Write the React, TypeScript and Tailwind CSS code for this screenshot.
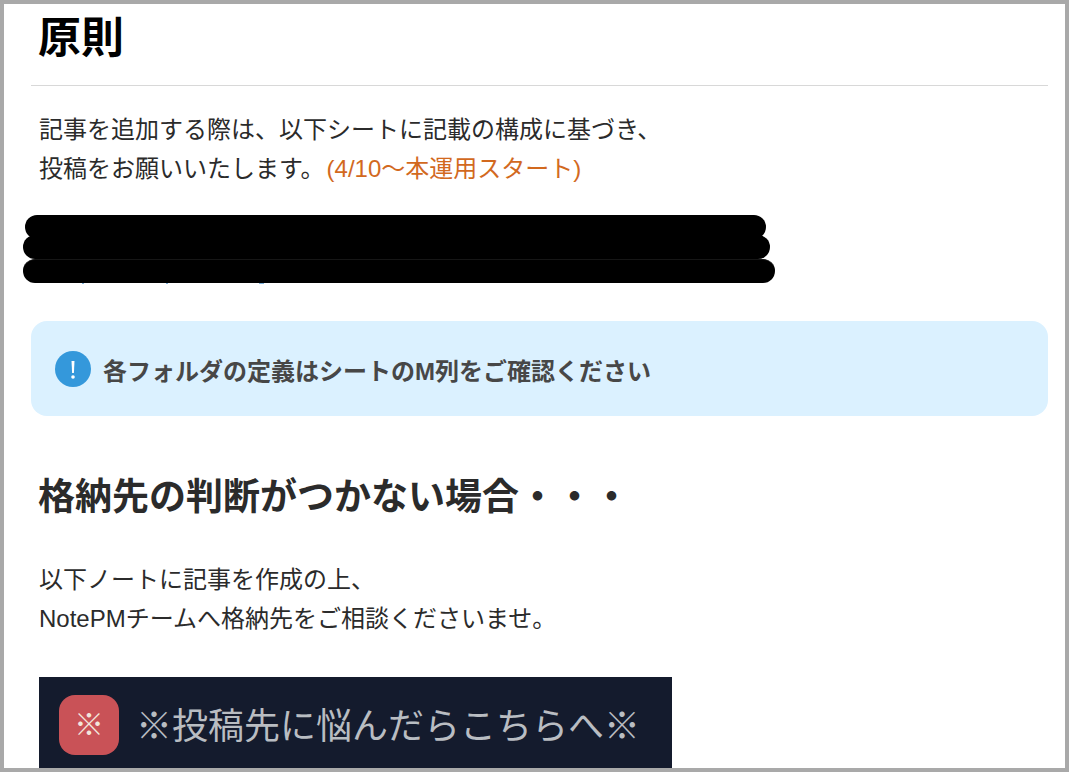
export default function App() {
  const font = { fontFamily: '"Liberation Sans", "Noto Sans CJK JP", sans-serif' };
  return (
    <div style={font} className="h-[772px] w-[1069px] overflow-hidden border-4 border-[#a9a9a9] bg-white">
      <div className="flex h-full flex-col overflow-hidden pl-[27px] pr-[17px]">
        <h1 className="ml-[7px] h-[81px] shrink-0 pt-[8px] text-[43px] leading-[52px] font-bold text-black">原則</h1>
        <div className="h-px shrink-0 bg-[#d8d8d8]" />
        <p className="mt-[24px] ml-[8px] shrink-0 text-[24px] leading-[39px] text-[#2b2b2b]">
          記事を追加する際は、以下シートに記載の構成に基づき、
          <br />
          投稿をお願いいたします。<span className="ml-[2px] text-[#d2691e]">(4/10～本運用スタート)</span>
        </p>
        <div className="mt-[27px] -ml-[8px] flex shrink-0 flex-col items-start">
          <div className="ml-[2px] h-[24px] w-[741px] rounded-[12px] bg-black" />
          <div className="-mt-[4px] h-[24px] w-[747px] rounded-[12px] bg-black" />
          <div className="h-[24px] w-[752px] rounded-[12px] border-t border-[#161616] bg-black" />
          <div className="flex h-px">
            <span className="ml-[59px] w-[2px] bg-[#7fb2dc]" />
            <span className="ml-[82px] w-[2px] bg-[#7fb2dc]" />
            <span className="ml-[91px] w-[5px] bg-[#7fb2dc]" />
          </div>
        </div>
        <div className="mt-[37px] flex h-[95px] shrink-0 items-center gap-[12px] rounded-[16px] bg-[#dbf1ff] pl-[24px]">
          <svg width="36" height="36" viewBox="0 0 36 36" className="shrink-0">
            <circle cx="18" cy="18" r="18" fill="#3498db" />
            <path d="M16.5 10h3l-.6 12h-1.8z" fill="#fff" />
            <circle cx="18" cy="26" r="1.8" fill="#fff" />
          </svg>
          <span className="pt-[6px] text-[24px] leading-[32px] font-bold text-[#474747]">各フォルダの定義はシートのM列をご確認ください</span>
        </div>
        <h2 className="mt-[58px] ml-[7px] shrink-0 text-[37px] leading-[48px] font-bold text-[#2b2b2b]">格納先の判断がつかない場合・・・</h2>
        <p className="mt-[38px] ml-[8px] shrink-0 text-[24px] leading-[39px] text-[#2b2b2b]">
          以下ノートに記事を作成の上、
          <br />
          NotePMチームへ格納先をご相談くださいませ。
        </p>
        <div className="mt-[39px] ml-[8px] flex h-[92px] w-[633px] shrink-0 items-start gap-[17px] bg-[#141b2d] pt-[18px] pl-[20px]">
          <div className="flex h-[60px] w-[60px] shrink-0 items-center justify-center rounded-[16px] bg-[#c95257] text-[30px] leading-none text-[#f3e6dc]">※</div>
          <span className="pt-[7px] text-[36px] leading-[50px] whitespace-nowrap text-[#b9bdc2]">※投稿先に悩んだらこちらへ※</span>
        </div>
      </div>
    </div>
  );
}
